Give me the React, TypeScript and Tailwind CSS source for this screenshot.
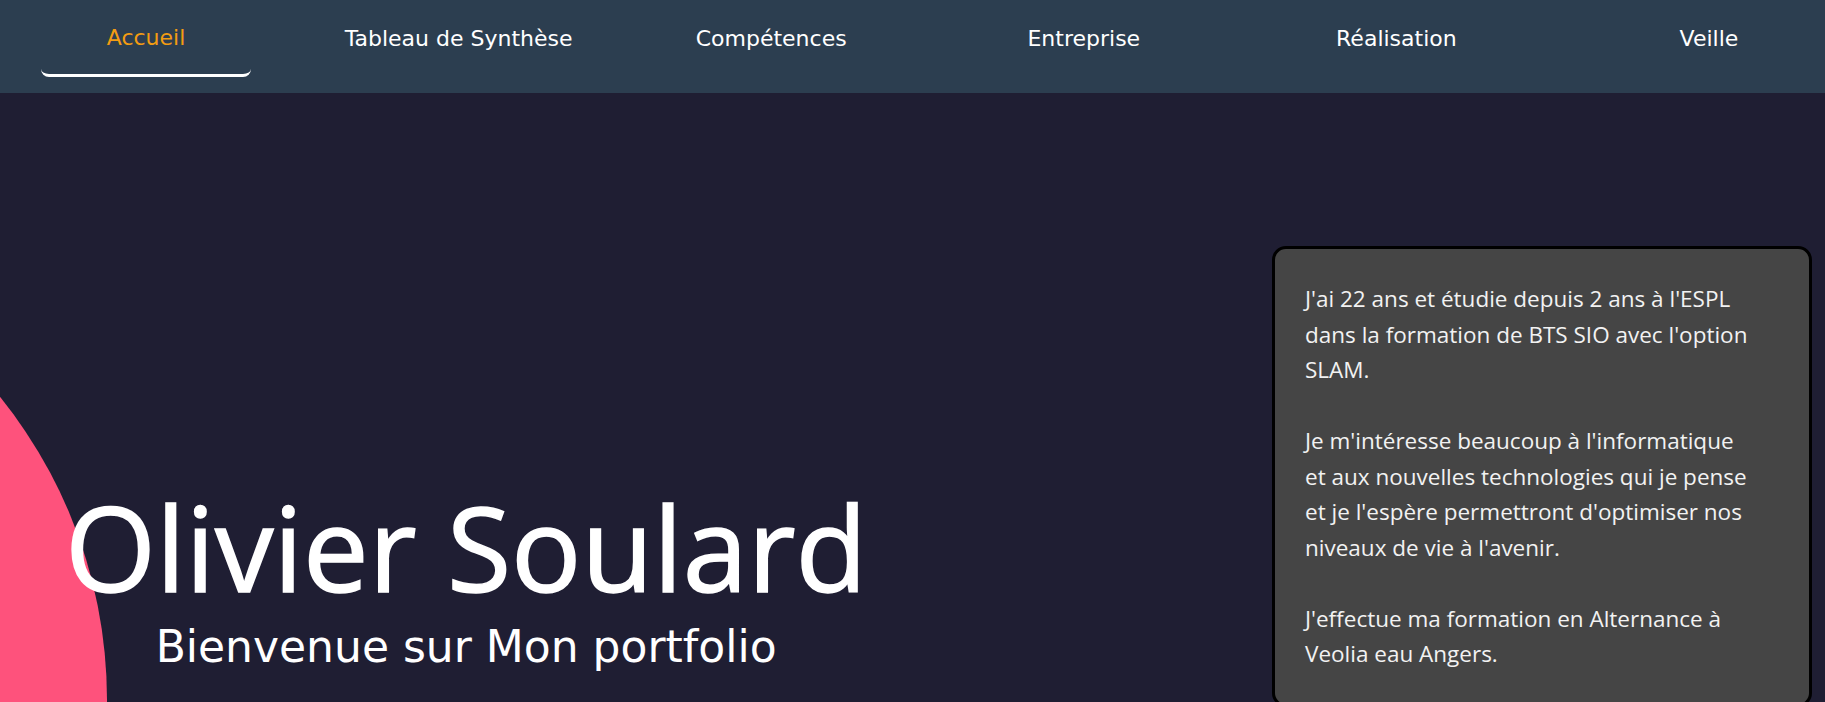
import React from "react";

const navItems = [
  "Accueil",
  "Tableau de Synthèse",
  "Compétences",
  "Entreprise",
  "Réalisation",
  "Veille",
];

const comic = "font-['Comic_Sans_MS','DejaVu_Sans',sans-serif]";
const segoe = "font-['Segoe_UI','Open_Sans',sans-serif]";

export default function App() {
  return (
    <div className="relative h-screen overflow-hidden bg-[#1f1e33]">
      {/* Navbar */}
      <nav className="relative z-10 h-[93px] bg-[#2c3e50]">
        <ul className="flex h-[77px] items-stretch justify-between pl-[41px] pr-[11px]">
          {navItems.map((item, i) => (
            <li
              key={item}
              className={`flex w-[210px] items-center justify-center whitespace-nowrap rounded-lg text-[22px] ${comic} ${
                i === 0
                  ? "border-b-[3px] border-white text-[#f39c12]"
                  : "text-white"
              }`}
            >
              {item}
            </li>
          ))}
        </ul>
      </nav>

      {/* Pink blob */}
      <div className="absolute left-[-859px] top-[217px] h-[966px] w-[966px] rounded-full bg-[#fe527c]" />

      {/* Hero */}
      <section className="relative z-10 flex items-start justify-between pl-[65px] pr-[13px]">
        <div className="flex flex-col items-center pt-[395px] text-white">
          <h1 className={`text-[117px] leading-none [-webkit-text-stroke:1.5px_white] ${segoe}`}>
            Olivier Soulard
          </h1>
          <h2 className={`mt-[20px] text-[44px] leading-none ${comic}`}>
            Bienvenue sur Mon portfolio
          </h2>
        </div>

        <div
          className={`mt-[153px] w-[540px] rounded-[14px] border-[3px] border-black bg-[#454545] px-[30px] py-[32px] text-[22.5px] leading-[35.5px] text-[#f2f2f2] ${segoe}`}
        >
          <p>
            J'ai 22 ans et étudie depuis 2 ans à l'ESPL
            <br />
            dans la formation de BTS SIO avec l'option
            <br />
            SLAM.
          </p>
          <p className="mt-[35.5px]">
            Je m'intéresse beaucoup à l'informatique
            <br />
            et aux nouvelles technologies qui je pense
            <br />
            et je l'espère permettront d'optimiser nos
            <br />
            niveaux de vie à l'avenir.
          </p>
          <p className="mt-[35.5px]">
            J'effectue ma formation en Alternance à
            <br />
            Veolia eau Angers.
          </p>
        </div>
      </section>
    </div>
  );
}
